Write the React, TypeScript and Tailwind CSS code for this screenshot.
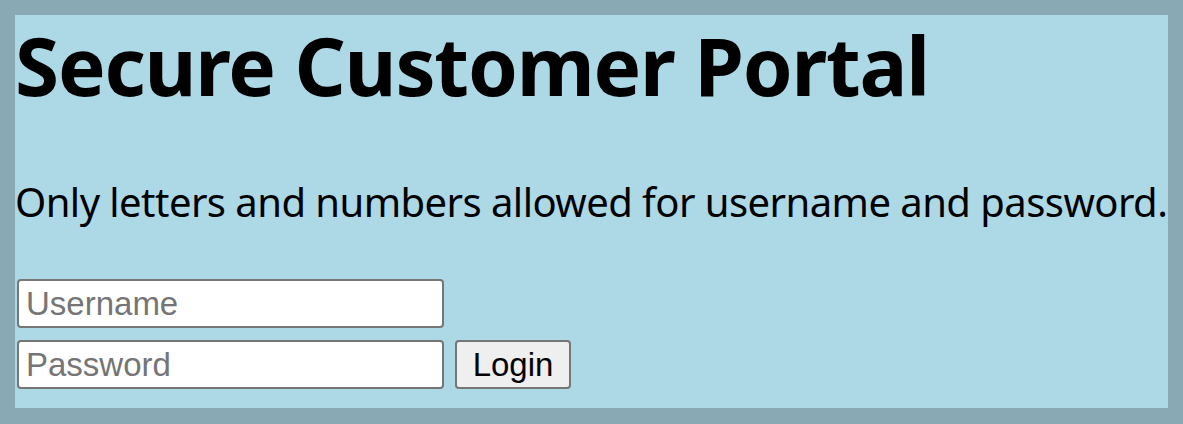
export default function App() {
  return (
    <div className="h-[424px] w-[1183px] bg-[#89aab5] pt-[15px] pb-[16px] px-[15px]">
      <div className="flow-root h-full bg-[#add8e6]">
        <h1 className="font-['Noto_Sans',sans-serif] font-bold text-[80px] leading-[110px] tracking-[-1.2px] text-black whitespace-nowrap -mt-[5px]">
          Secure Customer Portal
        </h1>
        <p className="font-['Noto_Sans',sans-serif] text-[40px] leading-[56px] text-black mt-[54px] tracking-[-0.55px] whitespace-nowrap">
          Only letters and numbers allowed for username and password.
        </p>
        <form className="mt-[49px] flex flex-col gap-[12px] pl-[2px]">
          <input
            type="text"
            placeholder="Username"
            className="w-[427px] h-[49px] bg-white border-2 border-[#767676] rounded-[4px] px-[7px] font-['Liberation_Sans',Arial,sans-serif] text-[33px] placeholder:text-[#757575]"
          />
          <div className="flex items-center gap-[11px]">
            <input
              type="password"
              placeholder="Password"
              className="w-[427px] h-[49px] bg-white border-2 border-[#767676] rounded-[4px] px-[7px] font-['Liberation_Sans',Arial,sans-serif] text-[33px] placeholder:text-[#757575]"
            />
            <button
              type="button"
              className="w-[116px] h-[49px] bg-[#efefef] border-2 border-[#767676] rounded-[4px] font-['Liberation_Sans',Arial,sans-serif] text-[33px] text-black leading-none"
            >
              Login
            </button>
          </div>
        </form>
      </div>
    </div>
  );
}
